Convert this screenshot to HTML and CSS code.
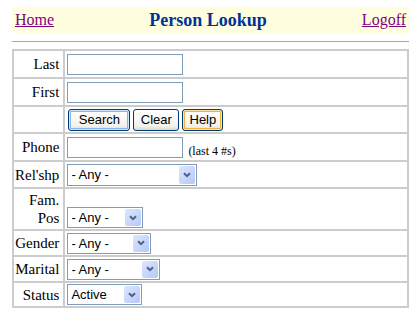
FILE: index.html
```html
<!DOCTYPE html>
<html lang="en">
<head>
  <meta charset="UTF-8">
  <meta name="viewport" content="width=device-width, initial-scale=1.0">
  <title>Person Lookup</title>
  <link rel="stylesheet" href="styles.css">
</head>
<body>
  <!-- Barra superior -->
  <div class="topbar">
    <a href="#" class="nav">Home</a>
    <h1 class="title">Person Lookup</h1>
    <a href="#" class="nav logoff">Logoff</a>
  </div>
  <hr class="rule">

  <!-- Formulario de busqueda -->
  <form onsubmit="return false">
    <table class="lookup">
      <tr class="h26">
        <td class="label">Last</td>
        <td class="field"><input type="text" class="txt"></td>
      </tr>
      <tr class="h26">
        <td class="label">First</td>
        <td class="field"><input type="text" class="txt"></td>
      </tr>
      <tr class="h25">
        <td class="label"></td>
        <td class="field">
          <div class="buttons">
            <button class="btn btn-search">Search</button>
            <button class="btn btn-clear" type="reset">Clear</button>
            <button class="btn btn-help">Help</button>
          </div>
        </td>
      </tr>
      <tr class="h26">
        <td class="label">Phone</td>
        <td class="field">
          <div class="phone">
            <input type="text" class="txt">
            <span class="hint">(last 4 #s)</span>
          </div>
        </td>
      </tr>
      <tr class="h25">
        <td class="label">Rel'shp</td>
        <td class="field">
          <span class="pick">
            <select class="sel w130 tall"><option>- Any -</option></select>
            <span class="arrow"><svg width="8" height="6" viewBox="0 0 8 6"><path d="M1 1.2 L4 4.2 L7 1.2" fill="none" stroke="#4d6185" stroke-width="2"/></svg></span>
          </span>
        </td>
      </tr>
      <tr class="h40">
        <td class="label">Fam. Pos</td>
        <td class="field bottom">
          <span class="pick">
            <select class="sel w76"><option>- Any -</option></select>
            <span class="arrow"><svg width="8" height="6" viewBox="0 0 8 6"><path d="M1 1.2 L4 4.2 L7 1.2" fill="none" stroke="#4d6185" stroke-width="2"/></svg></span>
          </span>
        </td>
      </tr>
      <tr class="h24">
        <td class="label">Gender</td>
        <td class="field">
          <span class="pick">
            <select class="sel w84"><option>- Any -</option></select>
            <span class="arrow"><svg width="8" height="6" viewBox="0 0 8 6"><path d="M1 1.2 L4 4.2 L7 1.2" fill="none" stroke="#4d6185" stroke-width="2"/></svg></span>
          </span>
        </td>
      </tr>
      <tr class="h24">
        <td class="label">Marital</td>
        <td class="field">
          <span class="pick">
            <select class="sel w93"><option>- Any -</option></select>
            <span class="arrow"><svg width="8" height="6" viewBox="0 0 8 6"><path d="M1 1.2 L4 4.2 L7 1.2" fill="none" stroke="#4d6185" stroke-width="2"/></svg></span>
          </span>
        </td>
      </tr>
      <tr class="h23">
        <td class="label">Status</td>
        <td class="field">
          <span class="pick">
            <select class="sel w75"><option>Active</option><option>Inactive</option></select>
            <span class="arrow"><svg width="8" height="6" viewBox="0 0 8 6"><path d="M1 1.2 L4 4.2 L7 1.2" fill="none" stroke="#4d6185" stroke-width="2"/></svg></span>
          </span>
        </td>
      </tr>
    </table>
  </form>
</body>
</html>
```

FILE: styles.css
```css
body {
  margin: 0;
  padding: 7px 11px 0 12px;
  font-family: "Liberation Serif", "Times New Roman", serif;
  background-color: #fff;
  color: #000;
}

/* Barra superior */
.topbar {
  display: grid;
  grid-template-columns: 1fr auto 1fr;
  align-items: center;
  height: 26px;
  padding: 0 3px;
  background-color: #ffffe0;
}

.nav {
  color: #800080;
  font-size: 16px;
}

.logoff {
  justify-self: end;
}

.title {
  margin: 0;
  padding-right: 5px;
  font-size: 18px;
  color: #003399;
}

.rule {
  margin: 8px 0 0;
  border: 0;
  border-top: 1px solid #a8a8a8;
  height: 0;
}

/* Tabla del formulario */
.lookup {
  margin-top: 7px;
  width: 100%;
  border-collapse: separate;
  border-spacing: 2px;
  background-color: #cccccc;
}

.lookup td {
  background-color: #fff;
  padding: 0 2px;
  font-size: 15px;
  line-height: 18px;
  vertical-align: middle;
}

.lookup td.label {
  width: 44px;
  padding: 0 4px 0 1px;
  text-align: right;
}

.lookup td.bottom {
  vertical-align: bottom;
  padding-bottom: 1px;
}

.h26 { height: 26px; }
.h25 { height: 25px; }
.h24 { height: 24px; }
.h23 { height: 23px; }
.h40 { height: 40px; }

.txt {
  display: block;
  box-sizing: border-box;
  width: 116px;
  height: 21px;
  margin: 0;
  padding: 1px 2px;
  border: 1px solid #7f9db9;
  font-family: "Liberation Sans", Arial, sans-serif;
  font-size: 13px;
}

.phone {
  display: flex;
  align-items: flex-end;
  gap: 5px;
}

.hint {
  font-size: 12px;
  line-height: 14px;
}

/* Botones estilo XP */
.buttons {
  display: flex;
  gap: 3px;
  padding-left: 1px;
}

.btn {
  box-sizing: border-box;
  height: 22px;
  padding: 0;
  border: 1px solid #003c74;
  border-radius: 3px;
  background: linear-gradient(#ffffff, #f3f2ec 80%, #dcd7cb);
  color: #000;
  font-family: "Liberation Sans", Arial, sans-serif;
  font-size: 13px;
  cursor: pointer;
}

.btn-search {
  width: 62px;
  box-shadow: inset 0 0 0 1px #cee7ff, inset 0 0 0 2px #8db0ea;
}

.btn-clear {
  width: 46px;
}

.btn-help {
  width: 41px;
  box-shadow: inset 0 0 0 1px #fce3a3, inset 0 0 0 2px #f5b13a;
}

/* Listas desplegables */
.pick {
  position: relative;
  display: flex;
  width: fit-content;
}

.sel {
  appearance: none;
  -webkit-appearance: none;
  box-sizing: border-box;
  height: 21px;
  margin: 0;
  padding: 0 0 0 3px;
  border: 1px solid #7f9db9;
  border-radius: 0;
  background-color: #fff;
  color: #000;
  font-family: "Liberation Sans", Arial, sans-serif;
  font-size: 13px;
}

.sel.tall { height: 22px; }

.w130 { width: 130px; }
.w76 { width: 76px; }
.w84 { width: 84px; }
.w93 { width: 93px; }
.w75 { width: 75px; }

.arrow {
  position: absolute;
  top: 2px;
  right: 2px;
  bottom: 2px;
  width: 16px;
  display: flex;
  align-items: center;
  justify-content: center;
  border-radius: 2px;
  background: linear-gradient(135deg, #dde6fe, #b4c8f8);
  pointer-events: none;
}
```
